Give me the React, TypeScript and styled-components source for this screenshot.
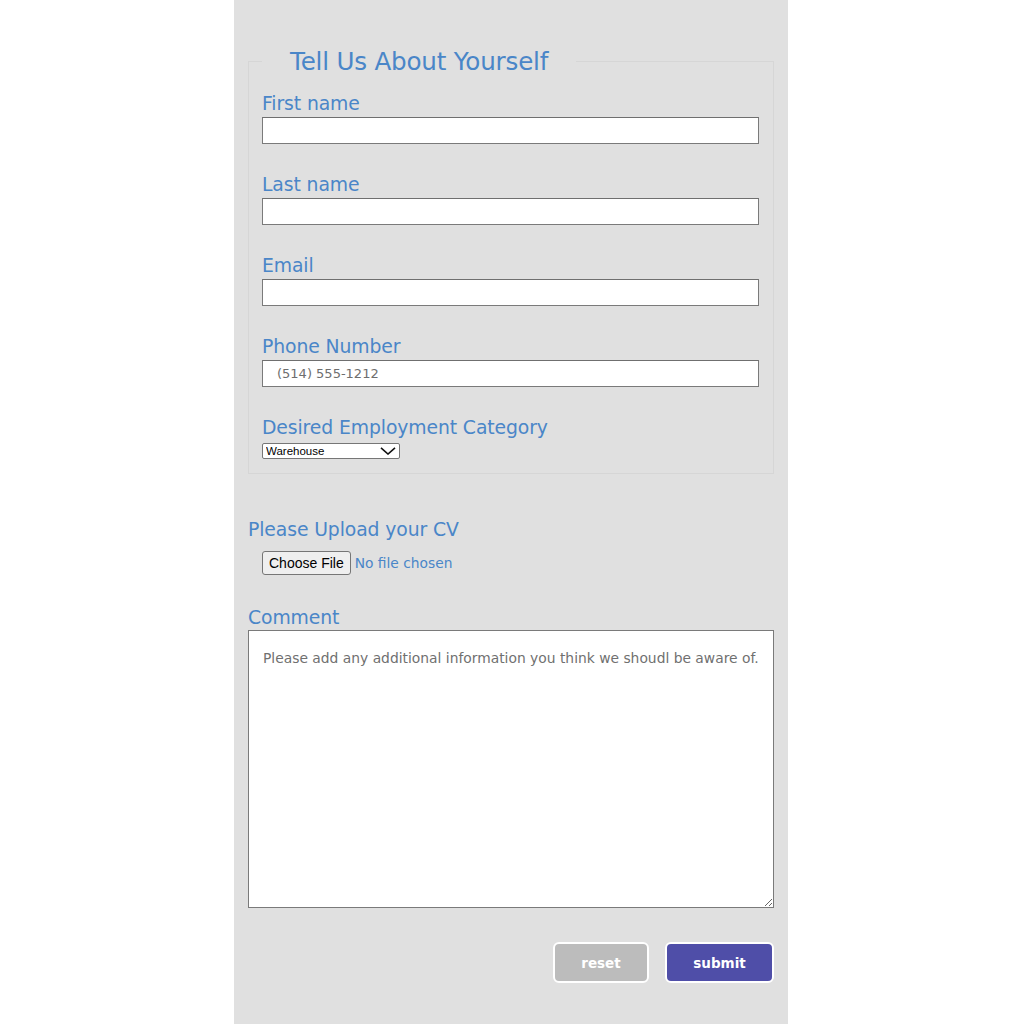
import React from "react";
import styled, { createGlobalStyle } from "styled-components";

const Global = createGlobalStyle`
  html, body { margin: 0; padding: 0; background: #ffffff; }
  body { font-family: "DejaVu Sans", "Noto Sans", sans-serif; }
`;

const Page = styled.div`
  display: flex;
  justify-content: center;
  min-height: 1024px;
`;

const Panel = styled.form`
  width: 554px;
  box-sizing: border-box;
  background: #e0e0e0;
  padding: 47px 14px 42px 14px;
  min-height: 1024px;
  display: flex;
  flex-direction: column;
  margin-left: -2px;
`;

const FieldSet = styled.fieldset`
  margin: 0;
  border: 1px solid #d6d6d6;
  padding: 14px 13px 14px 13px;
  display: flex;
  flex-direction: column;
`;

const Legend = styled.legend`
  font-family: "DejaVu Sans", sans-serif;
  font-size: 24.6px;
  color: #4a86c8;
  padding: 0 28px;
  margin-left: 0;
  letter-spacing: -0.2px;
`;

const Group = styled.div<{ $last?: boolean }>`
  display: flex;
  flex-direction: column;
  margin-bottom: ${(p) => (p.$last ? "0" : "27px")};
`;

const Label = styled.label`
  font-family: "DejaVu Sans", sans-serif;
  font-size: 18.8px;
  color: #4a86c8;
  line-height: 27px;
  letter-spacing: -0.1px;
`;

const TextInput = styled.input`
  box-sizing: border-box;
  width: 497px;
  height: 27px;
  border: 1px solid #7a7a7a;
  border-top-color: #6f6f6f;
  background: #ffffff;
  padding: 0 14px;
  font-family: "DejaVu Sans", sans-serif;
  font-size: 13px;
  color: #555;
  margin: 0;
  &::placeholder { color: #6e6e6e; }
`;

const SelectWrap = styled.div`
  position: relative;
  width: 138px;
  height: 16px;
  margin-top: 2px;
`;

const Select = styled.select`
  display: block;
  appearance: none;
  box-sizing: border-box;
  width: 138px;
  height: 16px;
  border: 1px solid #767676;
  border-radius: 2px;
  background: #ffffff;
  font-family: "Liberation Sans", Arial, sans-serif;
  font-size: 11.5px;
  color: #000;
  padding: 0 0 0 3px;
  margin: 0;
  line-height: 14px;
`;

const Chevron = styled.svg`
  position: absolute;
  right: 4px;
  top: 4px;
  pointer-events: none;
`;

const Section = styled.div<{ $top?: number }>`
  display: flex;
  flex-direction: column;
  margin-top: ${(p) => p.$top ?? 0}px;
`;

const UploadRow = styled.div`
  display: flex;
  align-items: center;
  padding-left: 14px;
  margin-top: 8px;
  margin-bottom: 29px;
`;

const FileInput = styled.input`
  font-family: "DejaVu Sans", sans-serif;
  font-size: 13.8px;
  color: #4a86c8;
  &::file-selector-button {
    font-family: "Liberation Sans", Arial, sans-serif;
    font-size: 14px;
    color: #000;
    background: #efefef;
    border: 1px solid #767676;
    border-radius: 3px;
    height: 24px;
    padding: 0 6px;
    margin-right: 4px;
  }
`;

const TextArea = styled.textarea`
  box-sizing: border-box;
  width: 526px;
  height: 278px;
  border: 1px solid #7a7a7a;
  background: #fff;
  padding: 19px 14px;
  font-family: "DejaVu Sans", sans-serif;
  font-size: 13.85px;
  color: #555;
  margin: -1px 0 0 0;
  resize: both;
  &::placeholder { color: #707070; }
`;

const Buttons = styled.div`
  display: flex;
  justify-content: flex-end;
  gap: 16px;
  margin-top: 34px;
`;

const Button = styled.button<{ $primary?: boolean }>`
  box-sizing: border-box;
  height: 41px;
  width: ${(p) => (p.$primary ? "109px" : "96px")};
  border: 2px solid #ffffff;
  border-radius: 6px;
  background: ${(p) => (p.$primary ? "#4f4ea8" : "#bcbcbc")};
  color: #ffffff;
  font-family: "DejaVu Sans", sans-serif;
  font-weight: bold;
  font-size: 13.5px;
  cursor: pointer;
`;

const fields = [
  { id: "first", label: "First name", placeholder: "" },
  { id: "last", label: "Last name", placeholder: "" },
  { id: "email", label: "Email", placeholder: "" },
  { id: "phone", label: "Phone Number", placeholder: "(514) 555-1212" },
];

export default function App() {
  return (
    <>
      <Global />
      <Page>
        <Panel onSubmit={(e) => e.preventDefault()}>
          <FieldSet>
            <Legend>Tell Us About Yourself</Legend>
            {fields.map((f) => (
              <Group key={f.id}>
                <Label htmlFor={f.id}>{f.label}</Label>
                <TextInput id={f.id} type="text" placeholder={f.placeholder} />
              </Group>
            ))}
            <Group $last>
              <Label htmlFor="category">Desired Employment Category</Label>
              <SelectWrap>
                <Select id="category" defaultValue="Warehouse">
                  <option>Warehouse</option>
                  <option>Office</option>
                  <option>Retail</option>
                </Select>
                <Chevron width="16" height="8" viewBox="0 0 16 8">
                  <path d="M1 0.8 L8 7 L15 0.8" fill="none" stroke="#111" strokeWidth="1.6" />
                </Chevron>
              </SelectWrap>
            </Group>
          </FieldSet>
          <Section $top={42}>
            <Label htmlFor="cv">Please Upload your CV</Label>
            <UploadRow>
              <FileInput id="cv" type="file" />
            </UploadRow>
          </Section>
          <Section>
            <Label htmlFor="comment">Comment</Label>
            <TextArea
              id="comment"
              placeholder="Please add any additional information you think we shoudl be aware of."
            />
          </Section>
          <Buttons>
            <Button type="reset">reset</Button>
            <Button type="submit" $primary>
              submit
            </Button>
          </Buttons>
        </Panel>
      </Page>
    </>
  );
}
